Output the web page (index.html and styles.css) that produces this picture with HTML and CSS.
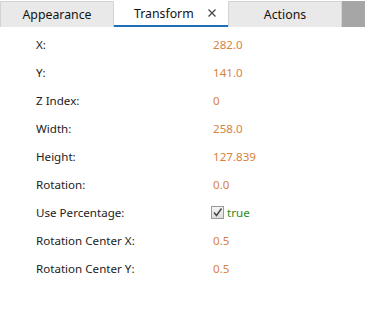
FILE: index.html
```html
<!DOCTYPE html>
<html lang="en">
  <head>
    <meta charset="utf-8" />
    <title>Properties</title>
    <link rel="stylesheet" href="styles.css">
  </head>
  <body>
    <div class="tabs">
      <div class="tab">Appearance</div>
      <div class="tab active">
        <span>Transform</span>
        <svg class="close" width="8" height="8" viewBox="0 0 8 8"><path d="M0.5 0.5 L7.5 7.5 M7.5 0.5 L0.5 7.5" stroke="#444" stroke-width="1.2"/></svg>
      </div>
      <div class="tab">Actions</div>
      <div class="tab-fill"></div>
    </div>
    <div class="props">
      <div class="row"><span class="label">X:</span><span class="value">282.0</span></div>
      <div class="row"><span class="label">Y:</span><span class="value">141.0</span></div>
      <div class="row"><span class="label">Z Index:</span><span class="value">0</span></div>
      <div class="row"><span class="label">Width:</span><span class="value">258.0</span></div>
      <div class="row"><span class="label">Height:</span><span class="value">127.839</span></div>
      <div class="row"><span class="label">Rotation:</span><span class="value">0.0</span></div>
      <div class="row">
        <span class="label">Use Percentage:</span>
        <span class="value bool">
          <span class="check">
            <svg width="11" height="11" viewBox="0 0 11 11"><path d="M2 5.5 L4.5 8.5 L9.5 1.5" fill="none" stroke="#444" stroke-width="1.4"/></svg>
          </span>
          true
        </span>
      </div>
      <div class="row"><span class="label">Rotation Center X:</span><span class="value">0.5</span></div>
      <div class="row"><span class="label">Rotation Center Y:</span><span class="value">0.5</span></div>
    </div>
  </body>
</html>
```
FILE: styles.css
```css
body {
  margin: 0;
  font-family: "Noto Sans", "Open Sans", sans-serif;
  background: #fff;
  color: #222;
}
.tabs {
  display: flex;
  height: 27px;
  padding-top: 1px;
  box-sizing: border-box;
}
.tab {
  width: 114px;
  flex: none;
  box-sizing: border-box;
  background: #e9e9e9;
  border: 1px solid #d4d4d4;
  border-bottom: none;
  font-size: 12.3px;
  display: flex;
  align-items: center;
  justify-content: center;
  color: #111;
}
.tab.active {
  background: #fff;
  border: none;
  border-bottom: 2px solid #1e6fb8;
  justify-content: flex-start;
  padding: 0 12px 0 20px;
}
.close {
  margin-left: auto;
}
.tab-fill {
  flex: 1;
  background: #a6a6a6;
}
.props {
  padding: 3px 0 0 36px;
}
.row {
  display: flex;
  align-items: center;
  height: 28px;
  font-size: 11.6px;
}
.label {
  width: 177px;
  flex: none;
}
.value {
  color: #d7823e;
}
.value.bool {
  display: flex;
  align-items: center;
  gap: 3px;
  color: #2d8a1c;
  margin-left: -2px;
}
.check {
  width: 13px;
  height: 13px;
  box-sizing: border-box;
  border: 1px solid #9a9a9a;
  background: linear-gradient(#f4f4f4, #dcdcdc);
  display: flex;
  align-items: center;
  justify-content: center;
}
```
